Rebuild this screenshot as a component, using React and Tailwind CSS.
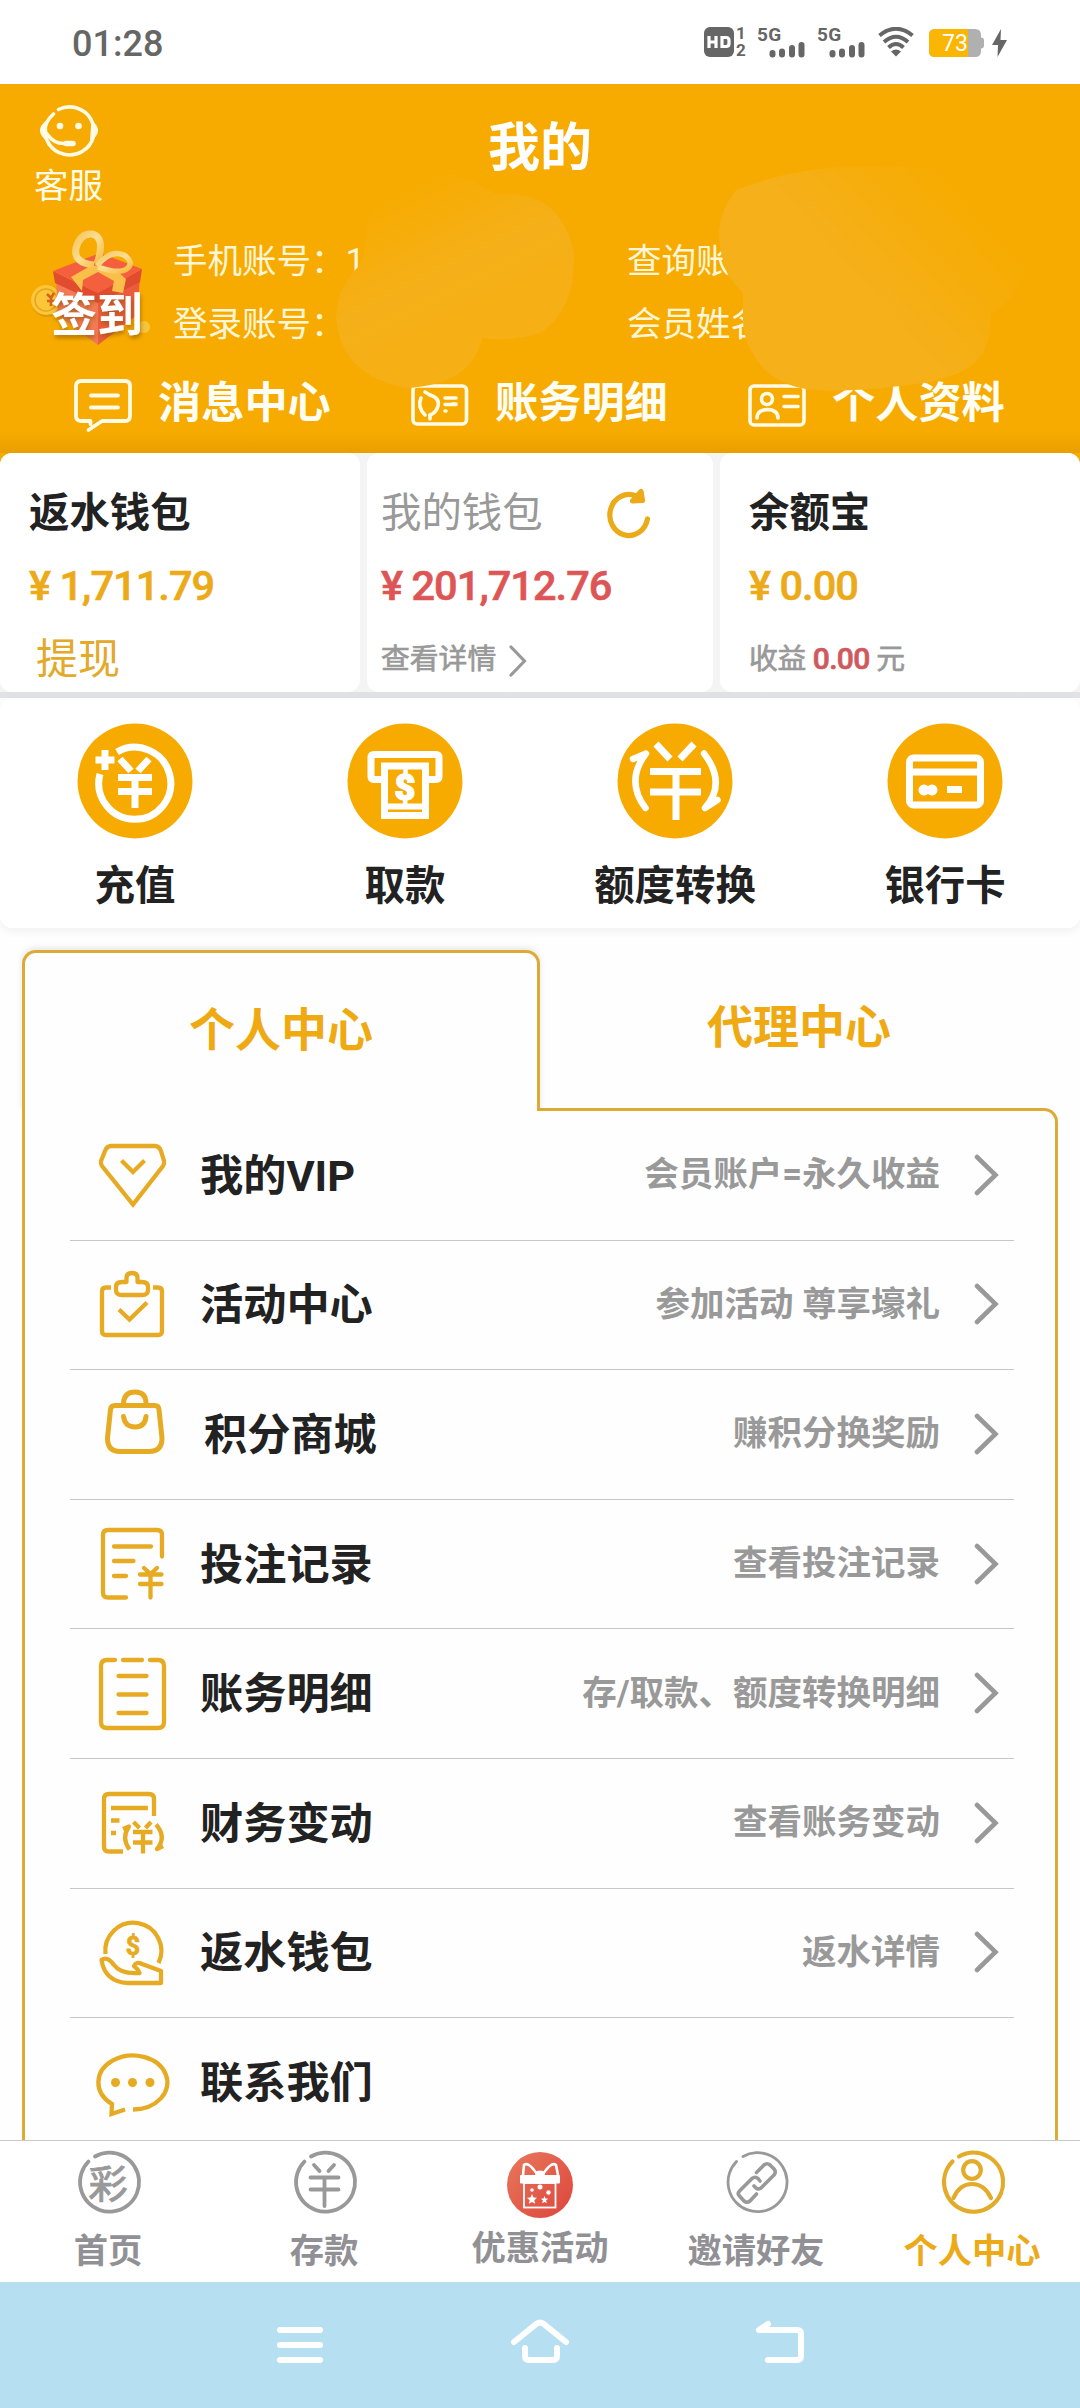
import React, { useState } from 'react';

const menuItems = [
  { icon: VipIcon, title: '我的VIP', desc: '会员账户=永久收益' },
  { icon: ActivityIcon, title: '活动中心', desc: '参加活动 尊享壕礼' },
  { icon: ShopIcon, title: '积分商城', desc: '赚积分换奖励', shifted: true },
  { icon: RecordIcon, title: '投注记录', desc: '查看投注记录' },
  { icon: ListIcon, title: '账务明细', desc: '存/取款、额度转换明细' },
  { icon: FinanceIcon, title: '财务变动', desc: '查看账务变动' },
  { icon: RebateIcon, title: '返水钱包', desc: '返水详情' },
  { icon: ContactIcon, title: '联系我们', desc: '' },
];

const actions = [
  { icon: DepositIcon, label: '充值' },
  { icon: WithdrawIcon, label: '取款' },
  { icon: TransferIcon, label: '额度转换' },
  { icon: CardIcon, label: '银行卡' },
];

const navItems = [
  { icon: LotteryIcon, label: '首页' },
  { icon: YuanIcon, label: '存款' },
  { icon: GiftIcon, label: '优惠活动', raised: true },
  { icon: LinkIcon, label: '邀请好友' },
  { icon: UserIcon, label: '个人中心' },
];

/* ---------- Status bar ---------- */

function SignalIcon() {
  return (
    <div className="w-[50px] h-[36px] relative">
      <span className="absolute left-0 top-0 text-[19px] leading-[22px] font-bold tracking-[0.4px]">5G</span>
      <svg className="w-[50px] h-[36px]" viewBox="0 0 50 36" stroke="#666" strokeWidth="6" strokeLinecap="round">
        <path d="M15.500 29v1.500M25 27.500v3M35 24v6.500M44.500 21v9.500" />
      </svg>
    </div>
  );
}

function StatusBar() {
  return (
    <div className="h-[84px] shrink-0 flex items-center bg-white pl-[72px] pr-[73px] text-[#666]">
      <span className="text-[36px] leading-none mt-[3px] font-medium">01:28</span>
      <div className="ml-auto flex items-center">
        <svg className="w-[30px] h-[32px]" viewBox="0 0 30 32">
          <rect x="0" y="1" width="30" height="30" rx="6" fill="#666" />
          <path d="M5 10v12M12 10v12M5 16h7M18 11.500h4q3 0 3 3v3q0 3-3 3h-4z" stroke="#fff" strokeWidth="3.200" fill="none" />
        </svg>
        <div className="w-[14px] mr-[9px] pl-[2px] flex flex-col text-[17px] leading-[17px] font-bold">
          <span>1</span>
          <span>2</span>
        </div>
        <SignalIcon />
        <span className="w-[10px]" />
        <SignalIcon />
        <svg className="w-[36px] h-[30px] ml-[11px]" viewBox="0 0 36 30" fill="none" stroke="#666" strokeWidth="4">
          <path d="M1.500 8.500Q18-5 34.500 8.500" />
          <path d="M6 15Q18 4.500 30 15" />
          <path d="M10.500 20.500Q18 13.500 25.500 20.500" />
          <path d="M13 24.500Q18 20.500 23 24.500L18 29.500z" fill="#666" stroke="none" />
        </svg>
        <div className="relative w-[55px] h-[28px] ml-[15px] mt-[2px]">
          <svg className="w-[55px] h-[28px]" viewBox="0 0 55 28">
            <path d="M6 0H46q6 0 6 6v2.500q3 0 3 3v5q0 3-3 3V22q0 6-6 6H6q-6 0-6-6V6Q0 0 6 0z" fill="#b0b0b0" />
            <path d="M6 0H39V28H6q-6 0-6-6V6Q0 0 6 0z" fill="#fbb604" />
          </svg>
          <span className="absolute left-[13px] top-0 text-[23px] leading-[29px] text-white">73</span>
        </div>
        <svg className="w-[15px] h-[28px] ml-[8px] mt-[2px]" viewBox="0 0 15 28">
          <path d="M9 0L0 16h6L5.500 28 15 11H8.500z" fill="#666" />
        </svg>
      </div>
    </div>
  );
}

/* ---------- Header ---------- */

function ServiceIcon() {
  return (
    <svg className="w-[58px] h-[52px]" viewBox="0 0 58 52" fill="none" stroke="#fffbe6" strokeWidth="3.600" strokeLinecap="round">
      <path d="M18.500 4.500A24.500 24 0 1 1 9 39" />
      <path d="M13.500 9Q-1 22 9 39" />
      <path d="M7 29Q14 39 25 38.500" />
      <path d="M26 38.500H33" strokeWidth="5.500" />
      <path d="M5 19q-7 6.500 1 14zM53 19q7 6.500-1 14z" fill="#fffbe6" />
      <circle cx="20" cy="21" r="3.300" fill="#fffbe6" stroke="none" />
      <circle cx="38.500" cy="21" r="3.300" fill="#fffbe6" stroke="none" />
    </svg>
  );
}

function SignInGift() {
  return (
    <svg className="w-[140px] h-[140px]" viewBox="0 0 140 140">
      <defs>
        <linearGradient id="ribbon" x1="0" y1="0" x2="1" y2="1">
          <stop offset="0" stopColor="#f5c65a" />
          <stop offset="0.5" stopColor="#fbdf94" />
          <stop offset="1" stopColor="#f9b93c" />
        </linearGradient>
        <filter id="textShadow" x="-20%" y="-20%" width="140%" height="150%">
          <feDropShadow dx="1" dy="3" stdDeviation="2" floodColor="#8a5200" floodOpacity="0.6" />
        </filter>
      </defs>
      <circle cx="27" cy="74" r="16" fill="#d99a0c" />
      <circle cx="26" cy="73" r="15" fill="#fbc63a" />
      <circle cx="26" cy="73" r="11" fill="none" stroke="#e9a51c" strokeWidth="1.500" />
      <path d="M27 67l4 4 3-5M31 71v8M27 74h8" stroke="#d5641a" strokeWidth="2.500" fill="none" />
      <circle cx="124" cy="100" r="6" fill="#f3c63c" />
      <path d="M36 50L78 62V118L38 88z" fill="#f37a55" />
      <path d="M78 62L120 50 117 88 78 118z" fill="#ec5c3c" />
      <path d="M33 44L78 66V76L35 56zM122 42L78 66V76L120 55z" fill="#e14c2e" />
      <path d="M33 44L80 26 122 42 78 66z" fill="#f4603e" />
      <path d="M62 64L51 50 72 38 96 43 106 52 103 66 92 64 94 54 78 45 63 53z" fill="#f9bf4a" />
      <path d="M74 38Q53 36 56 21Q60 6 72 7Q86 10 77 37" fill="none" stroke="url(#ribbon)" strokeWidth="7" />
      <path d="M77 39Q90 22 104 28Q114 35 108 41Q100 48 78 40" fill="none" stroke="url(#ribbon)" strokeWidth="5.500" />
      <text x="31" y="104" fontSize="46" fontWeight="700" fontFamily="'Noto Sans CJK SC', sans-serif" fill="#fff" textLength="92" filter="url(#textShadow)">签到</text>
    </svg>
  );
}

function MessageIcon() {
  return (
    <svg className="w-[60px] h-[56px]" viewBox="0 0 60 56" fill="none" stroke="#fffbe6" strokeWidth="3.800" strokeLinecap="round" strokeLinejoin="round">
      <path d="M16.500 45V42H7q-5 0-5-5V7Q2 2 7 2H51q5 0 5 5V37q0 5-5 5H28L14.500 51" />
      <path d="M17 16.500H44M17 28.500H44" />
    </svg>
  );
}

function BillIcon() {
  return (
    <svg className="w-[60px] h-[56px]" viewBox="0 0 60 56" fill="none" stroke="#fffbe6" strokeWidth="3.600" strokeLinecap="round" strokeLinejoin="round">
      <rect x="2" y="7" width="53.500" height="38" rx="4" />
      <path d="M10 19q-4 9 4 17M19 16q10 3 8 11q-2 7-8 9" />
      <path d="M19 16l-5-3M19 36v4" />
      <path d="M34 19H45M34 25.500H45M34 32h1M41 25H45" />
    </svg>
  );
}

function ProfileIcon() {
  return (
    <svg className="w-[60px] h-[56px]" viewBox="0 0 60 56" fill="none" stroke="#fffbe6" strokeWidth="3.600" strokeLinecap="round" strokeLinejoin="round">
      <rect x="2" y="7" width="54" height="39" rx="4" />
      <circle cx="19" cy="20" r="5.500" />
      <path d="M9 39q0-8 10.500-8.500Q30 31 30 39M36 17.500H50M36 27.500H50" />
    </svg>
  );
}

// Smudges that hide the private account details
function Smudges() {
  return (
    <svg className="absolute left-0 top-0 w-[1080px] h-[368px] pointer-events-none" viewBox="0 84 1080 368">
      <defs>
        <linearGradient id="smudgeA" gradientUnits="userSpaceOnUse" x1="400" y1="190" x2="470" y2="330">
          <stop offset="0" stopColor="#f7ab00" />
          <stop offset="0.6" stopColor="#f5b019" />
          <stop offset="1" stopColor="#f6af14" />
        </linearGradient>
        <linearGradient id="smudgeB" gradientUnits="userSpaceOnUse" x1="960" y1="190" x2="860" y2="280">
          <stop offset="0" stopColor="#f7ab00" />
          <stop offset="1" stopColor="#f5b01a" />
        </linearGradient>
      </defs>
      <path d="M366 233Q370 175 448 172Q475 180 496 195Q560 188 574 253Q576 310 540 333Q510 342 482 338Q472 385 406 388Q340 375 336 317Q338 285 358 267Q368 250 366 233z" fill="url(#smudgeA)" />
      <path d="M719 233Q720 210 736 190Q800 165 867 167Q960 165 1022 187Q1050 280 991 313Q990 350 977 360Q960 380 900 386Q850 392 815 390Q785 388 765 370Q742 345 743 317V293Q735 285 728 275Q720 258 719 233z" fill="url(#smudgeB)" />
    </svg>
  );
}

function Header() {
  const links = [
    { icon: MessageIcon, label: '消息中心' },
    { icon: BillIcon, label: '账务明细' },
    { icon: ProfileIcon, label: '个人资料' },
  ];

  return (
    <div className="relative h-[369px] shrink-0 bg-[#f7ab00] text-white">
      <div className="h-[134px] grid grid-cols-3">
        <div className="flex flex-col items-start pt-[21px] pl-[34px]">
          <div className="flex flex-col items-center">
            <ServiceIcon />
            <span className="text-[34.5px] leading-[40px] mt-[9px] text-[#fffbe6]">客服</span>
          </div>
        </div>
        <h1 className="text-center text-[52px] leading-[60px] font-bold pt-[35px]">我的</h1>
      </div>
      <div className="flex h-[146px]">
        <div className="w-[173px] pl-[20px] pt-[9px]">
          <SignInGift />
        </div>
        <div className="w-[454px] pt-[12px] text-[34.5px] leading-[63px] text-[#fff6d8]">
          <p className="whitespace-pre">手机账号：1</p>
          <p>登录账号：</p>
        </div>
        <div className="pt-[12px] text-[34.5px] leading-[63px] text-[#fff6d8]">
          <p>查询账号：</p>
          <p>会员姓名：</p>
        </div>
      </div>
      <div className="flex pl-[74px] pt-[15px]">
        {links.map(({ icon: Icon, label }) => (
          <button key={label} className="w-[337px] shrink-0 flex items-start">
            <Icon />
            <span className="ml-[24px] text-[43.2px] leading-[50px] font-bold text-[#fffef5]">{label}</span>
          </button>
        ))}
      </div>
      <Smudges />
      <div className="absolute inset-x-0 bottom-0 h-[22px] bg-linear-to-b from-transparent to-[#e89f00]" />
    </div>
  );
}

/* ---------- Wallets ---------- */

function Amount({ value, className }) {
  return (
    <p className={`mt-[22px] text-[41.5px] leading-[50px] font-medium tracking-[-0.95px] [-webkit-text-stroke:0.6px] ${className}`}>
      ¥ {value}
    </p>
  );
}

function Wallets() {
  return (
    <div className="bg-linear-to-b from-[#f7ab00] from-[5%] to-[#e1e2e4] to-[5%] pb-[6px] shrink-0">
      <div className="flex gap-[7px] h-[239px] bg-[#f4f4f5] rounded-t-[12px]">
        <div className="w-[360px] bg-white rounded-[12px] pl-[29px]">
          <p className="mt-[36px] text-[40.4px] leading-[50px] font-bold text-[#222]">返水钱包</p>
          <Amount value="1,711.79" className="text-[#ecaa18]" />
          <p className="mt-[24px] pl-[7px] text-[42px] leading-[50px] text-[#e3a92a]">提现</p>
        </div>
        <div className="w-[346px] bg-white rounded-[12px] pl-[14px]">
          <div className="mt-[36px] flex items-center">
            <span className="text-[40.4px] leading-[50px] text-[#999]">我的钱包</span>
            <svg className="ml-[64px] w-[44px] h-[52px] -mt-[5px] -mb-[3px]" viewBox="0 0 44 52" fill="none" stroke="#ecaa18" strokeWidth="5.200" strokeLinecap="round" strokeLinejoin="round">
              <path d="M40.500 32A19 20.500 0 1 1 29 9" />
              <path d="M34 4.500l1.500 9L25.500 14z" fill="#ecaa18" />
            </svg>
          </div>
          <Amount value="201,712.76" className="text-[#dd5555]" />
          <div className="mt-[23px] flex items-center">
            <span className="text-[28.8px] leading-[50px] text-[#999] [-webkit-text-stroke:0.7px]">查看详情</span>
            <svg className="ml-[13px] mt-[4px] w-[18px] h-[32px]" viewBox="0 0 18 32" fill="none" stroke="#999" strokeWidth="3.200" strokeLinecap="round">
              <path d="M2 2L15.500 16 2 30" />
            </svg>
          </div>
        </div>
        <div className="flex-1 bg-white rounded-[12px] pl-[29px]">
          <p className="mt-[36px] text-[40.4px] leading-[50px] font-bold text-[#222]">余额宝</p>
          <Amount value="0.00" className="text-[#ecaa18]" />
          <p className="mt-[23px] text-[28.8px] leading-[50px] tracking-[-0.3px] text-[#999] [-webkit-text-stroke:0.7px]">
            收益 <span className="text-[#cf5a5e] text-[30px] font-medium tracking-[-0.7px]">0.00</span> 元
          </p>
        </div>
      </div>
    </div>
  );
}

/* ---------- Round action buttons ---------- */

function RoundIcon({ children }) {
  return (
    <svg className="w-[116px] h-[116px]" viewBox="0 0 116 116" fill="none" stroke="#fff" strokeWidth="7">
      <circle cx="58" cy="58" r="57.500" fill="#f7ab00" stroke="none" />
      {children}
    </svg>
  );
}

function DepositIcon() {
  return (
    <RoundIcon>
      <path d="M40 29A36 36 0 1 1 23 51" />
      <path d="M28 27v20M18.500 37h19" />
      <path d="M43 36l11 12M72 36L61 48M41 54.500H75M41 68.500H75M58 52v33" />
    </RoundIcon>
  );
}

function WithdrawIcon() {
  return (
    <RoundIcon>
      <path d="M37 56.500H27q-3 0-3-3V34.500q0-3 3-3H89q3 0 3 3V53.500q0 3-3 3H80" />
      <path d="M37.500 43H78.500V92.500H37.500z" />
      <path d="M41 83.500H75" strokeWidth="6" />
      <path d="M41 88H75" stroke="#f7ab00" strokeWidth="2.200" />
      <text x="58" y="77" fontSize="36" fontWeight="900" textAnchor="middle" fontFamily="Roboto, sans-serif" fill="#fff" stroke="#fff" strokeWidth="1.500">$</text>
    </RoundIcon>
  );
}

function TransferIcon() {
  return (
    <RoundIcon>
      <path d="M39 21l14 15M77 21L63 36M33 48.500H84M33 69H84M59 48v49" />
      <g strokeLinecap="round" strokeLinejoin="round" strokeWidth="6.500">
        <path d="M28.500 85Q8 58 29 30.500L16 36" />
        <path d="M87 30.500Q110 60 88 85L100.500 77" />
      </g>
    </RoundIcon>
  );
}

function CardIcon() {
  return (
    <RoundIcon>
      <rect x="22.500" y="35" width="71" height="47" rx="4" />
      <path d="M22 49H94M60 66.500H75" />
      <circle cx="37" cy="67" r="5.500" fill="#fff" stroke="none" />
      <circle cx="45" cy="67" r="5.500" fill="#fff" stroke="none" />
    </RoundIcon>
  );
}

/* ---------- Menu icons ---------- */

function MenuSvg({ children }) {
  return (
    <svg className="w-[84px] h-[84px] overflow-visible -mt-[2px]" viewBox="0 0 84 84" fill="none" stroke="#e6ab22" strokeWidth="4.300" strokeLinejoin="round">
      {children}
    </svg>
  );
}

function VipIcon() {
  return (
    <MenuSvg>
      <path d="M21 14H65q4 0 6 5l3 10q.500 3-1 5L43 72.500 12 34q-1.500-2-1-5L15 19q2-5 6-5z" strokeLinejoin="miter" />
      <path d="M31.500 28.500L43 40 54.500 28.500" strokeLinejoin="miter" />
    </MenuSvg>
  );
}

function ActivityIcon() {
  return (
    <MenuSvg>
      <path d="M21 25.500H16q-4 0-4 4V69q0 4 4 4H68q4 0 4-4V29.500q0-4-4-4H63" />
      <path d="M36.500 20V16q0-5 5.500-5t5.500 5v4H52q6 0 6 5v3q0 5-6 5H32q-6 0-6-5V25q0-5 6-5z" />
      <path d="M29 47.500L39.500 57.500 57 40.500" strokeLinejoin="miter" />
    </MenuSvg>
  );
}

function ShopIcon() {
  return (
    <MenuSvg>
      <g strokeWidth="5" strokeLinecap="round">
        <path d="M25 14.500H65q3.500 0 4 4L72 47q0 13.500-13 13.500H30Q17.500 60.500 17.500 47L20.500 18.500q.500-4 4.500-4z" />
        <path d="M33.500 12.500Q34 1 45 1T56 12.500M33.500 25.500Q35 36 45 36T56 25.500" />
      </g>
    </MenuSvg>
  );
}

function RecordIcon() {
  return (
    <MenuSvg>
      <g strokeLinecap="round">
        <path d="M36 76.500H18q-5 0-5-5V14q0-5 5-5H67q5 0 5 5V35.500" />
        <path d="M24 25.500H61M24 40H43.500M24 55H36" />
        <path d="M54 47l6.500 6 6.500-6M50 53.500H71.500M50 63H71.500M60.500 53.500V76.500" />
      </g>
    </MenuSvg>
  );
}

function ListIcon() {
  return (
    <MenuSvg>
      <g strokeLinecap="round">
        <path d="M25 9H17q-6 0-6 6V71q0 6 6 6H68q6 0 6-6V15q0-6-6-6H60M33 9H52" />
        <path d="M28.500 25H56.500M28.500 43.500H56.500M28.500 62H56.500" />
      </g>
    </MenuSvg>
  );
}

function FinanceIcon() {
  return (
    <MenuSvg>
      <path d="M33 71.500H19q-5 0-5-5V19q0-5 5-5H59q5 0 5 5V36" />
      <path d="M21 28H58M21 40.500H29.500M21 53H26" />
      <path d="M43.500 42l6 6M61 42l-5.500 6M43 52H62.500M43 62.500H62.500M53 52V73.500" />
      <path d="M39.500 69.500Q31 58 39 46.500L33 49M66 44.500Q77 57 67 69L73 66" />
    </MenuSvg>
  );
}

function RebateIcon() {
  return (
    <MenuSvg>
      <path d="M15.500 44A28 28 0 1 1 68.500 53" />
      <path d="M11.500 50Q17 45.500 24 55T49.500 63Q48 59 44 56Q46 51 52 54L71 61V73H38Q15 72 11.500 50z" />
      <text x="43" y="45" fontSize="25" fontWeight="700" textAnchor="middle" fontFamily="Roboto, sans-serif" fill="#e6ab22" stroke="#e6ab22" strokeWidth="0.800">$</text>
    </MenuSvg>
  );
}

function ContactIcon() {
  return (
    <MenuSvg>
      <path d="M43 69.500A34.500 27 0 1 0 22 64L21.500 74 35 69.500" strokeLinejoin="miter" />
      <g fill="#e6ab22" stroke="none">
        <circle cx="25.500" cy="42.500" r="4.500" />
        <circle cx="42.500" cy="42.500" r="4.500" />
        <circle cx="60" cy="42.500" r="4.500" />
      </g>
    </MenuSvg>
  );
}

function MenuRow({ icon: Icon, title, desc, shifted, last }) {
  return (
    <div className={`h-[129.6px] shrink-0 ml-[45px] mr-[41px] flex items-center pl-[20px] ${last ? '' : 'border-b border-[#c6c6c8]'}`}>
      <Icon />
      <span className={`mt-[3px] text-[43.2px] leading-[60px] font-bold text-[#222] ${shifted ? 'ml-[30px]' : 'ml-[26px]'}`}>{title}</span>
      {desc && (
        <>
          <span className="ml-auto text-[34.5px] leading-[50px] font-bold text-[#999] -mt-[2px]">{desc}</span>
          <svg className="ml-[34px] mr-[14px] w-[26px] h-[42px] -mt-px" viewBox="0 0 26 42" fill="none" stroke="#999" strokeWidth="4.600" strokeLinecap="round">
            <path d="M3 3L21.500 21 3 39" />
          </svg>
        </>
      )}
    </div>
  );
}

/* ---------- Bottom navigation ---------- */

function NavCircle({ color, width = 3.8, children }) {
  return (
    <svg className="w-[68px] h-[68px]" viewBox="0 0 68 68" fill="none" stroke={color} strokeWidth={width} strokeLinecap="round">
      <path d="M21 7.500A29.500 29.500 0 1 1 14.500 12.500" />
      {children}
    </svg>
  );
}

function LotteryIcon() {
  return (
    <NavCircle color="#999">
      <text x="34" y="48.500" fontSize="39" textAnchor="middle" fontFamily="'Noto Sans CJK SC', sans-serif" fill="#999" stroke="#999" strokeWidth="1">彩</text>
    </NavCircle>
  );
}

function YuanIcon() {
  return (
    <NavCircle color="#999">
      <path d="M24 16l5.500 6M44 16l-5.500 6M20.500 28.500H48.500M20.500 40.500H48.500M34.500 28.500V57" />
    </NavCircle>
  );
}

function GiftIcon() {
  return (
    <svg className="w-[68px] h-[68px]" viewBox="0 0 68 68" fill="none" stroke="#fff">
      <defs>
        <linearGradient id="giftBg" x1="0" y1="0" x2="1" y2="1">
          <stop offset="0" stopColor="#e8785c" />
          <stop offset="1" stopColor="#dd453c" />
        </linearGradient>
      </defs>
      <circle cx="34" cy="34" r="33" fill="url(#giftBg)" stroke="none" />
      <path d="M31 23Q22 10 18 14L17 24M37 23Q46 10 50 14L52 24" strokeWidth="2.600" strokeLinejoin="round" />
      <rect x="14" y="24" width="40" height="8.500" rx="1" fill="#fff" stroke="none" />
      <ellipse cx="34" cy="22.500" rx="5" ry="3" fill="#fff" stroke="none" />
      <rect x="18" y="32" width="31.500" height="24.500" strokeWidth="1.800" />
      <g fill="#fff" stroke="none">
        <path d="M26 43l1.500 3.500 3.500.300-2.700 2.400.900 3.600-3.200-1.900-3.200 1.900.900-3.600-2.700-2.400 3.500-.300z" />
        <path d="M38.500 45l1 2.600 2.700.200-2.100 1.800.700 2.700-2.300-1.400-2.300 1.400.700-2.700-2.100-1.800 2.700-.200z" />
        <circle cx="26" cy="39" r="1.800" />
        <circle cx="34" cy="36" r="2.500" />
        <circle cx="42.500" cy="41.500" r="2.200" />
      </g>
    </svg>
  );
}

function LinkIcon() {
  return (
    <NavCircle color="#999" width={2.8}>
      <g strokeLinejoin="round" strokeWidth="3.600">
        <path d="M34.500 23.500L42 16q3-2.500 6 0l4 4q2.500 3 0 6L39 39q-3 2-5 0l-2-2" />
        <path d="M38 32l-2-2.500q-3-2.500-6 0L17.500 42q-2.500 2.500 0 5l4.500 5q3 2.500 6 0l6.500-7" />
      </g>
    </NavCircle>
  );
}

function UserIcon() {
  return (
    <NavCircle color="#e3ab2a" width={4.2}>
      <circle cx="34" cy="21" r="8.800" />
      <path d="M15.500 49q6-14 18.500-14t19 14" />
    </NavCircle>
  );
}

function BottomNav({ active }) {
  return (
    <div className="h-[142px] shrink-0 border-t border-[#c9c9c9] bg-white grid grid-cols-5">
      {navItems.map(({ icon: Icon, label, raised }, i) => (
        <button key={label} className={`flex flex-col items-center ${raised ? 'pt-[10px]' : 'pt-[8px]'}`}>
          <Icon />
          <span
            className={`text-[34.3px] leading-[40px] font-bold ${raised ? 'mt-[9px]' : 'mt-[14px]'} ${
              i === active ? 'text-[#ecaa18]' : 'text-[#919195]'
            }`}
          >
            {label}
          </span>
        </button>
      ))}
    </div>
  );
}

function SystemNav() {
  return (
    <div className="h-[126px] shrink-0 bg-[#b6dff2] flex justify-center gap-[176px] pt-[30px]">
      <svg className="w-[64px] h-[64px]" viewBox="0 0 64 64" stroke="#fff" strokeWidth="6" strokeLinecap="round">
        <path d="M12 18H52M12 33H52M12 48H52" />
      </svg>
      <svg className="w-[64px] h-[64px]" viewBox="0 0 64 64" fill="none" stroke="#fff" strokeWidth="6" strokeLinecap="round">
        <path d="M6 30L29 11.500q3-2 6 0L58 30" />
        <path d="M17 36V44q0 4 4 4H45q4 0 4-4V36" />
      </svg>
      <svg className="w-[64px] h-[64px]" viewBox="0 0 64 64" fill="none" stroke="#fff" strokeWidth="6" strokeLinecap="round" strokeLinejoin="round">
        <path d="M20 12L11 18H49q4 0 4 4V44q0 4-4 4H20" />
      </svg>
    </div>
  );
}

export default function App() {
  const [tab, setTab] = useState(0);

  return (
    <div className="w-[1080px] h-[2408px] flex flex-col overflow-hidden bg-[#fefefe] font-[Roboto,'Noto_Sans_CJK_SC',sans-serif]">
      <StatusBar />
      <Header />
      <Wallets />

      <div className="h-[230px] shrink-0 bg-white rounded-[12px] grid grid-cols-4 shadow-[0_3px_10px_rgba(0,0,0,0.06)]">
        {actions.map(({ icon: Icon, label }) => (
          <button key={label} className="flex flex-col items-center pt-[25px]">
            <Icon />
            <span className="mt-[23px] text-[40.4px] leading-[50px] font-bold text-[#222]">{label}</span>
          </button>
        ))}
      </div>

      {/* Tabs */}
      <div className="mx-[22px] mt-[22px] h-[158px] shrink-0 flex">
        <button
          onClick={() => setTab(0)}
          className="relative z-10 w-[518px] h-[161px] pb-[4px] bg-[#fefefe] border-3 border-b-0 border-[#dcab35] rounded-t-[14px] shadow-[0_-2px_6px_rgba(0,0,0,0.1)] [clip-path:inset(-10px_-10px_0_-10px)] text-[46px] font-bold text-[#efaa13]"
        >
          个人中心
        </button>
        <button onClick={() => setTab(1)} className="flex-1 pb-[4px] text-[46px] font-bold text-[#efaa13]">
          代理中心
        </button>
      </div>
      <div className="mx-[22px] flex-1 min-h-0 overflow-hidden flex flex-col border-3 border-b-0 border-[#dcab35] rounded-tr-[14px]">
        {menuItems.map((item, i) => (
          <MenuRow key={item.title} {...item} last={i === menuItems.length - 1} />
        ))}
      </div>

      <BottomNav active={4} />
      <SystemNav />
    </div>
  );
}
